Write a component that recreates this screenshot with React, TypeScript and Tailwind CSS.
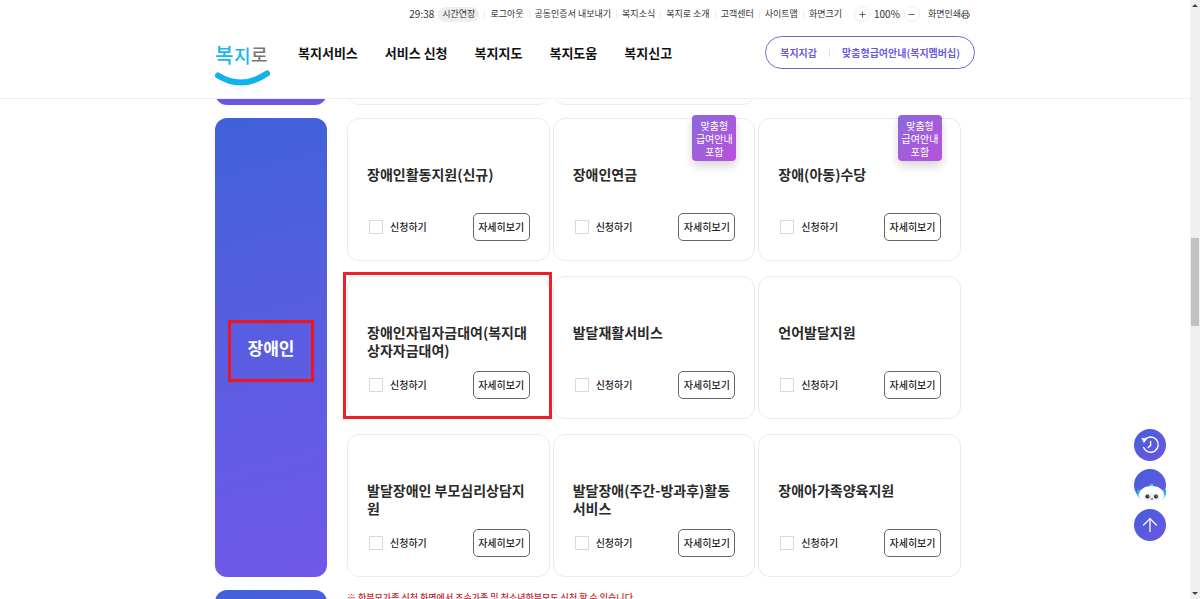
import { useState } from 'react';
import { ArrowUp, Minus, Plus, Printer } from 'lucide-react';
import clsx from 'clsx';

interface Service {
  id: string;
  title: string;
  custom?: boolean;
  marked?: boolean;
}

const services: Service[] = [
  { id: 'activity', title: '장애인활동지원(신규)' },
  { id: 'pension', title: '장애인연금', custom: true },
  { id: 'allowance', title: '장애(아동)수당', custom: true },
  { id: 'loan', title: '장애인자립자금대여(복지대상자자금대여)', marked: true },
  { id: 'rehab', title: '발달재활서비스' },
  { id: 'speech', title: '언어발달지원' },
  { id: 'counsel', title: '발달장애인 부모심리상담지원' },
  { id: 'daytime', title: '발달장애(주간-방과후)활동서비스' },
  { id: 'family', title: '장애아가족양육지원' },
];

const utilLinks = ['로그아웃', '공동인증서 내보내기', '복지소식', '복지로 소개', '고객센터', '사이트맵'];
const menus = ['복지서비스', '서비스 신청', '복지지도', '복지도움', '복지신고'];

function Divider() {
  return <span className="mx-[5px] h-2 w-px bg-[#ececec]" />;
}

function Logo() {
  return (
    <svg width="56" height="52" viewBox="0 0 56 52" role="img" aria-label="복지로">
      <g fontFamily="'Noto Sans CJK KR', sans-serif" fontWeight="500">
        <text x="0" y="27" fontSize="20" fill="#16b8ee">복</text>
        <text x="19" y="27" fontSize="18" fill="#16b8ee">지</text>
        <text x="36" y="26" fontSize="18" fill="#777">로</text>
      </g>
      <path d="M3 39.5 Q27 54.5 52 37.5" fill="none" stroke="#0cb4ee" strokeWidth="6" strokeLinecap="round" />
    </svg>
  );
}

function Header() {
  const [zoom, setZoom] = useState(100);

  return (
    <header className="relative z-10 shrink-0 border-b border-[#efefef] bg-white">
      <div className="mx-auto max-w-[760px]">
        <div className="flex h-7 items-center justify-end pr-[5px] text-[9px] leading-3 whitespace-nowrap text-[#333]">
          <span className="text-[10px]">29:38</span>
          <button className="ml-1 h-[15px] rounded-full bg-[#eeeeee] px-1">시간연장</button>
          {utilLinks.map(link => (
            <span key={link} className="flex items-center">
              <Divider />
              <a href="#">{link}</a>
            </span>
          ))}
          <Divider />
          <span>화면크기</span>
          <button
            aria-label="확대"
            onClick={() => setZoom(z => z + 10)}
            className="ml-3 flex size-4 items-center justify-center rounded-full border border-[#eeeeee]"
          >
            <Plus size={9} />
          </button>
          <span className="mx-1 text-[10px]">{zoom}%</span>
          <button
            aria-label="축소"
            onClick={() => setZoom(z => z - 10)}
            className="flex size-4 items-center justify-center rounded-full border border-[#eeeeee]"
          >
            <Minus size={9} />
          </button>
          <button className="ml-2 flex items-center">
            화면인쇄
            <Printer size={9} />
          </button>
        </div>

        <div className="flex h-[70px] items-start pt-2">
          <a href="#" className="mr-[27px] shrink-0">
            <Logo />
          </a>
          <nav className="flex h-[33px] items-center gap-[27px] text-[13px] leading-5 font-bold whitespace-nowrap text-[#111]">
            {menus.map(menu => (
              <a key={menu} href="#">{menu}</a>
            ))}
          </nav>
          <div className="ml-auto flex h-[33px] items-center rounded-full border border-[#7468cf] px-[14px] text-[10px] leading-4 font-bold whitespace-nowrap text-[#6a5cdc]">
            <a href="#">복지지갑</a>
            <span className="mx-3 h-2 w-px bg-[#dddddd]" />
            <a href="#">맞춤형급여안내(복지멤버십)</a>
          </div>
        </div>
      </div>
    </header>
  );
}

function ServiceCard({ service }: { service: Service }) {
  return (
    <li className="relative rounded-xl border border-[#ebebeb] bg-white px-[19px] pt-[46px] pb-[19px]">
      {service.custom && (
        <span className="absolute -top-1 right-[18px] flex h-[46px] w-11 items-center justify-center rounded bg-linear-to-br from-[#8a68dc] to-[#b94fdb] text-center text-[10px] leading-[13px] whitespace-nowrap text-white shadow-[0_5px_10px_rgba(0,0,0,0.16)]">
          맞춤형
          <br />
          급여안내
          <br />
          포함
        </span>
      )}
      <h3 className="min-h-9 text-[14px] leading-[18px] font-bold break-all text-[#2a2a2a]">{service.title}</h3>
      <div className="mt-3 flex items-center text-[10px] leading-4 font-medium text-[#222]">
        <input
          id={service.id}
          type="checkbox"
          className="ml-[2px] size-[14px] appearance-none border border-[#d9d9d9] bg-white checked:bg-[#5f50d8]"
        />
        <label htmlFor={service.id} className="ml-[7px]">신청하기</label>
        <button className="ml-auto h-7 w-[57px] rounded-[5px] border border-[#666] whitespace-nowrap">자세히보기</button>
      </div>
      {service.marked && (
        <span className="pointer-events-none absolute -top-[5px] -right-[3px] -bottom-px -left-[5px] z-10 border-3 border-[#ee2029]" />
      )}
    </li>
  );
}

function QuickMenu() {
  const circle = 'flex size-8 items-center justify-center rounded-full bg-linear-to-br from-[#3f5fdb] to-[#6d55e2] text-white';

  return (
    <div className="fixed right-[34px] bottom-[58px] flex flex-col gap-2">
      <button aria-label="최근 본 서비스" className={circle}>
        <svg width="20" height="20" viewBox="0 0 20 20" fill="none" stroke="currentColor" strokeWidth="1.4" strokeLinecap="round" strokeLinejoin="round">
          <path d="M4.6 5A7.6 7.6 0 1 1 3.6 12.6" />
          <path d="M2.2 3.4H6.8L4.2 7.2Z" fill="currentColor" strokeWidth="0.8" />
          <path d="M10.6 6.5V10.4L8.2 12.6" />
        </svg>
      </button>
      <button aria-label="챗봇 상담" className={circle}>
        <svg width="32" height="32" viewBox="0 0 32 32">
          <path d="M3 21Q6 19.500 8 22V31Q4 29 3 25Z" fill="#1fb0dc" />
          <path d="M32 21Q29 19.500 27 22V31Q31 29 32 25Z" fill="#1fb0dc" />
          <circle cx="17.5" cy="17" r="2.2" fill="#4fc3ee" />
          <path d="M4.500 27C5 20 11 17 17.5 17S30 20 30.5 27C29 32 23 33 17.5 33S6 32 4.5 27Z" fill="#fff" />
          <path d="M9 27.8C9.5 24.8 13 24.2 17.5 24.2S25.5 24.8 26 27.8C25.500 31 22 31.6 17.5 31.6S9.5 31 9 27.8Z" fill="#e9eef2" />
          <circle cx="13.5" cy="27.6" r="2" fill="#222b33" />
          <circle cx="22" cy="27.6" r="2" fill="#222b33" />
          <circle cx="14" cy="27" r="0.6" fill="#fff" />
          <circle cx="22.5" cy="27" r="0.6" fill="#fff" />
          <path d="M16.4 29.6q1.400 1.200 2.800 0" fill="none" stroke="#333" strokeWidth="0.8" />
        </svg>
      </button>
      <button aria-label="맨 위로" className={circle}>
        <ArrowUp size={22} strokeWidth={1.4} />
      </button>
    </div>
  );
}

function ScrollTrack() {
  return (
    <div className="flex w-[10px] shrink-0 flex-col items-center justify-between bg-[#f0f0f0] py-1">
      <svg width="6" height="3" viewBox="0 0 6 3"><path d="M0 3 3 0 6 3Z" fill="#444" /></svg>
      <div className="relative w-2 flex-1">
        <div className="absolute top-[39.5%] h-[15%] w-full bg-[#c1c1c1]" />
      </div>
      <svg width="6" height="3" viewBox="0 0 6 3"><path d="M0 0 3 3 6 0Z" fill="#444" /></svg>
    </div>
  );
}

const sidePanel = 'flex w-28 shrink-0 items-center justify-center rounded-xl bg-linear-165 from-[#3f61da] to-[#7058e8]';

export default function App() {
  return (
    <div className="flex h-screen overflow-hidden bg-white font-['Noto_Sans_CJK_KR',sans-serif]">
      <div className="flex min-w-0 flex-1 flex-col">
        <Header />
        <main className="min-h-0 flex-1">
          <div className="mx-auto -mt-7 flex max-w-[760px] flex-col gap-[13px] pr-[14px]">
            {/* tail of the previous group, tucked under the header */}
            <section className="flex h-[34px] gap-5">
              <div className="w-28 shrink-0 rounded-xl bg-[#6b57e6]" />
              <div className="grid flex-1 grid-cols-3 gap-[3px]">
                <div className="rounded-xl border border-[#ebebeb]" />
                <div className="rounded-xl border border-[#ebebeb]" />
              </div>
            </section>

            <section className="flex gap-5">
              <div className={sidePanel}>
                <h2 className="relative text-[17px] leading-6 font-bold text-white">
                  장애인
                  <span className="absolute -inset-x-5 -top-4 -bottom-[22px] border-3 border-[#f0141e]" />
                </h2>
              </div>
              <ul className="grid flex-1 grid-cols-3 gap-x-[3px] gap-y-[15px]">
                {services.map(service => (
                  <ServiceCard key={service.id} service={service} />
                ))}
              </ul>
            </section>

            <section className="flex gap-5">
              <div className={clsx(sidePanel, 'h-36')} />
              <p className="text-[9px] leading-4 font-medium text-[#c4262e]">
                ※ 한부모가족 신청 화면에서 조손가족 및 청소년한부모도 신청 할 수 있습니다.
              </p>
            </section>
          </div>
        </main>
      </div>
      <ScrollTrack />
      <QuickMenu />
    </div>
  );
}
